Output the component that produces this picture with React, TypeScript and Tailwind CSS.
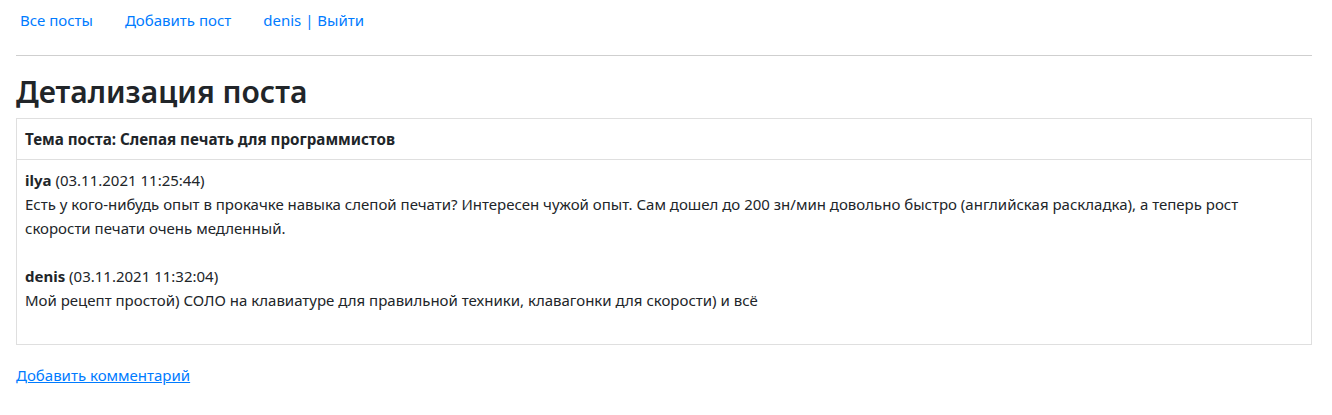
export default function App() {
  return (
    <div
      className="min-h-screen bg-white pl-4 pr-5 text-[15px] leading-6 text-[#212529]"
      style={{ fontFamily: '"Noto Sans", "Open Sans", sans-serif' }}
    >
      {/* Top navigation */}
      <nav className="flex pt-2 pl-[4px]">
        <a href="#" className="text-[#007bff]">Все посты</a>
        <a href="#" className="ml-8 text-[#007bff]">Добавить пост</a>
        <a href="#" className="ml-8 text-[#007bff]">denis | Выйти</a>
      </nav>
      <hr className="mt-[23px] border-0 border-t border-[#cfcfcf]" />

      <h2 className="mt-[17px] text-[30px] font-semibold leading-[38px]">Детализация поста</h2>

      {/* Post card */}
      <div className="mt-[7px] border border-[#dfdfdf]">
        <div className="border-b border-[#dfdfdf] px-2 py-2 text-[15.2px] font-bold">
          Тема поста: Слепая печать для программистов
        </div>
        <div className="px-2 pt-2 pb-8">
          <div className="mb-6">
            <div>
              <b>ilya</b> (03.11.2021 11:25:44)
            </div>
            <div>
              Есть у кого-нибудь опыт в прокачке навыка слепой печати? Интересен чужой опыт. Сам дошел до 200 зн/мин довольно быстро (английская раскладка), а теперь рост скорости печати очень медленный.
            </div>
          </div>
          <div>
            <div>
              <b>denis</b> (03.11.2021 11:32:04)
            </div>
            <div>Мой рецепт простой) СОЛО на клавиатуре для правильной техники, клавагонки для скорости) и всё</div>
          </div>
        </div>
      </div>

      <div className="mt-[18px]">
        <a href="#" className="text-[#007bff] underline">Добавить комментарий</a>
      </div>
    </div>
  );
}
